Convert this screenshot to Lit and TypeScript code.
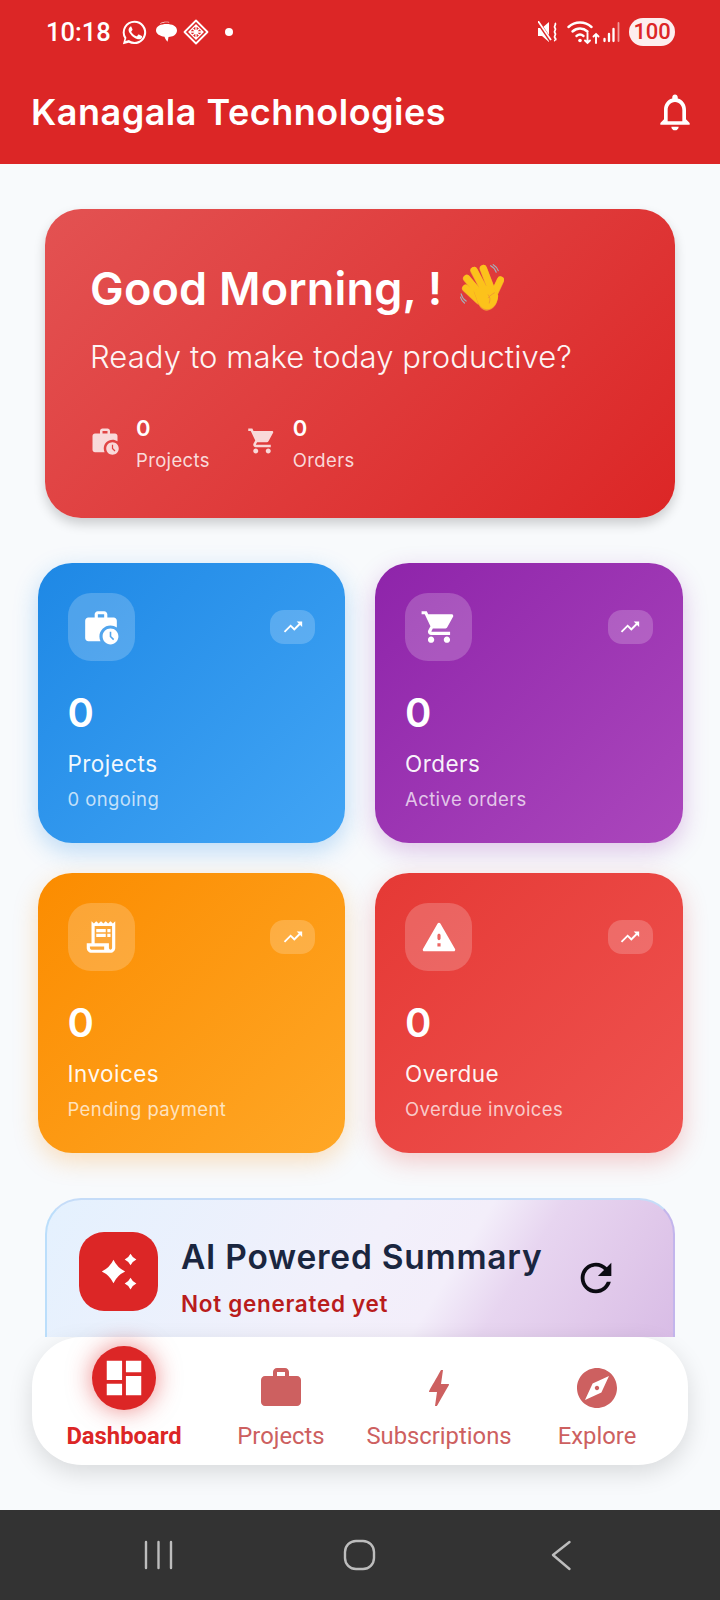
import { LitElement, html, css } from "lit";
import { customElement } from "lit/decorators.js";

const star = (cx: number, cy: number, r: number) => {
  const k = r * 0.32;
  return `M${cx} ${cy - r}Q${cx + k} ${cy - k} ${cx + r} ${cy}Q${cx + k} ${cy + k} ${cx} ${cy + r}Q${cx - k} ${cy + k} ${cx - r} ${cy}Q${cx - k} ${cy - k} ${cx} ${cy - r}z`;
};

const P = {
  bell: "M12 22c1.1 0 2-.9 2-2h-4c0 1.1.89 2 2 2zm6-6v-5c0-3.07-1.64-5.64-4.5-6.32V4c0-.83-.67-1.5-1.5-1.5s-1.5.67-1.5 1.5v.68C7.63 5.36 6 7.92 6 11v5l-2 2v1h16v-1l-2-2zm-2 1H8v-6c0-2.48 1.51-4.5 4-4.5s4 2.02 4 4.5v6z",
  workHistory: "M18 11c1.49 0 2.87.47 4 1.26V8c0-1.11-.89-2-2-2h-4V4c0-1.11-.89-2-2-2h-4c-1.11 0-2 .89-2 2v2H4c-1.11 0-1.99.89-1.99 2L2 19c0 1.11.89 2 2 2h7.68c-.43-.91-.68-1.92-.68-3 0-3.87 3.13-7 7-7zm-8-7h4v2h-4V4zM18 13c-2.76 0-5 2.24-5 5s2.24 5 5 5 5-2.24 5-5-2.24-5-5-5zm1.65 7.35L17.5 18.2V15h1v2.79l1.85 1.85-.7.71z",
  cart: "M7 18c-1.1 0-1.99.9-1.99 2S5.9 22 7 22s2-.9 2-2-.9-2-2-2zM1 2v2h2l3.6 7.59-1.35 2.45c-.16.28-.25.61-.25.96 0 1.1.9 2 2 2h12v-2H7.42c-.14 0-.25-.11-.25-.25l.03-.12.9-1.63h7.45c.75 0 1.41-.41 1.75-1.03l3.58-6.49c.08-.14.12-.31.12-.48 0-.55-.45-1-1-1H5.21l-.94-2H1zm16 16c-1.1 0-1.99.9-1.99 2s.89 2 1.99 2 2-.9 2-2-.9-2-2-2z",
  receipt: "M19.5 3.5 18 2l-1.5 1.5L15 2l-1.5 1.5L12 2l-1.5 1.5L9 2 7.5 3.5 6 2v14H3v3c0 1.66 1.34 3 3 3h12c1.66 0 3-1.34 3-3V2l-1.5 1.5zM15 20H6c-.55 0-1-.45-1-1v-1h9v2zm4-1c0 .55-.45 1-1 1s-1-.45-1-1v-3H8V5h11v14zM9 7h6v2H9zM16 7h2v2h-2zM9 10h6v2H9zM16 10h2v2h-2z",
  warning: "M2.73 21h18.53c.77 0 1.25-.83.87-1.5l-9.27-16c-.38-.67-1.35-.67-1.73 0l-9.27 16c-.38.67.1 1.5.87 1.5zM13 18h-2v-2h2v2zm-1-4c-.55 0-1-.45-1-1v-2c0-.55.45-1 1-1s1 .45 1 1v2c0 .55-.45 1-1 1z",
  trend: "M16 6l2.29 2.29-4.88 4.88-4-4L2 16.59 3.41 18l6-6 4 4 6.3-6.29L22 12V6z",
  dashboard: "M3 13h8V3H3v10zm0 8h8v-6H3v6zm10 0h8V11h-8v10zm0-18v6h8V3h-8z",
  work: "M20 6h-4V4c0-1.11-.89-2-2-2h-4c-1.11 0-2 .89-2 2v2H4c-1.11 0-1.99.89-1.99 2L2 19c0 1.11.89 2 2 2h16c1.11 0 2-.89 2-2V8c0-1.11-.89-2-2-2zm-6 0h-4V4h4v2z",
  bolt: "M11 21h-1l1-7H7.5c-.58 0-.57-.32-.38-.66.19-.34.05-.08.07-.12C8.48 10.94 10.42 7.54 13 3h1l-1 7h3.5c.49 0 .56.33.47.51l-.07.15C12.96 17.55 11 21 11 21z",
  explore: "M12 10.9c-.61 0-1.1.49-1.1 1.1s.49 1.1 1.1 1.1c.61 0 1.1-.49 1.1-1.1s-.49-1.1-1.1-1.1zM12 2C6.48 2 2 6.48 2 12s4.48 10 10 10 10-4.48 10-10S17.52 2 12 2zm2.19 12.19L6 18l3.81-8.19L18 6l-3.81 8.19z",
  sparkle: star(8.9, 12, 7.2) + star(19.4, 4.6, 3.6) + star(19.4, 19.4, 3.6),
  refresh: "M17.65 6.35C16.2 4.9 14.21 4 12 4c-4.42 0-7.99 3.58-7.99 8s3.57 8 7.99 8c3.73 0 6.84-2.55 7.73-6h-2.08c-.82 2.33-3.04 4-5.65 4-3.31 0-6-2.69-6-6s2.69-6 6-6c1.66 0 3.14.69 4.22 1.78L13 11h7V4l-2.35 2.35z",
  whatsapp: "M12 2.2A9.7 9.7 0 0 0 3.7 16.9L2.4 21.7l4.9-1.3A9.7 9.7 0 1 0 12 2.2zm0 1.8a7.9 7.9 0 1 1-4.3 14.5l-.3-.2-2.9.8.8-2.8-.2-.3A7.9 7.9 0 0 1 12 4zM8.8 7.3c-.2 0-.5.1-.7.3-.3.3-1 1-1 2.3s1 2.7 1.1 2.8c.1.2 1.9 3.1 4.8 4.2 2.3.9 2.8.7 3.3.7.5-.1 1.6-.7 1.8-1.3.2-.6.2-1.2.2-1.3-.1-.1-.3-.2-.6-.3l-2-1c-.3-.1-.5-.2-.7.1l-.9 1.2c-.2.2-.3.2-.6.1-.3-.2-1.3-.5-2.4-1.5-.9-.8-1.5-1.8-1.7-2.1-.2-.3 0-.5.1-.6l.5-.5c.1-.2.2-.3.3-.5.1-.2 0-.4 0-.5l-.9-2.1c-.2-.5-.4-.5-.6-.5z",
};

const icon = (d: string, size: number, cls = "") => html`<svg class=${cls} width=${size} height=${size} viewBox="0 0 24 24" fill="currentColor" aria-hidden="true"><path d=${d} fill-rule="evenodd"></path></svg>`;

const wave = html`<svg class="wave" width="45" height="48" viewBox="40 25 135 145" aria-hidden="true">
  <path d="M135 30c8 4 14 11 17 20M143 27c7 4 12 10 15 18M46 115c2 9 8 17 15 22M44 125c2 7 6 13 12 18" fill="none" stroke="#a3b0bb" stroke-width="3.5" stroke-linecap="round"></path>
  <g fill="none" stroke="#f19534" stroke-width="23" stroke-linecap="round">
    <path d="M60 99l40 37M63 69l42 50M85 45l34 65M113 39l25 65M165 74l-18 38"></path>
  </g>
  <g fill="none" stroke="#fcc21b" stroke-width="20.5" stroke-linecap="round">
    <path d="M60 98l40 37M63 68l42 50M85 44l34 65M113 38l25 65M165 73l-18 38"></path>
  </g>
  <path d="M92 130l-8-22 30-16 30 4 14 26c-2 22-12 42-34 44-16 0-26-14-32-36z" fill="#f19534"></path>
  <path d="M92 128l-8-22 30-16 30 4 14 26c-2 21-12 40-33 42-16 0-27-13-33-34z" fill="#fcc21b"></path>
  <path d="M128 118c6 6 6 16 3 25M147 112c-7 4-14 8-19 15" fill="none" stroke="#f19534" stroke-width="2.5" stroke-linecap="round"></path>
</svg>`;

const stats = [
  { icon: P.workHistory, value: "0", title: "Projects", sub: "0 ongoing", tone: "blue" },
  { icon: P.cart, value: "0", title: "Orders", sub: "Active orders", tone: "purple" },
  { icon: P.receipt, value: "0", title: "Invoices", sub: "Pending payment", tone: "orange" },
  { icon: P.warning, value: "0", title: "Overdue", sub: "Overdue invoices", tone: "red" },
];

const navItems = [
  { icon: P.work, label: "Projects" },
  { icon: P.bolt, label: "Subscriptions" },
  { icon: P.explore, label: "Explore" },
];

@customElement("app-root")
export class AppRoot extends LitElement {
  static styles = css`
    :host { display: block; width: 720px; height: 1600px; background: #f8fafc; font-family: "Inter", "Liberation Sans", sans-serif; overflow: hidden; }
    .page { display: flex; flex-direction: column; height: 1600px; }
    .appbar { height: 164px; flex: none; background: #dc2626; color: #fff; display: flex; flex-direction: column; box-sizing: border-box; }
    .status { height: 64px; display: flex; align-items: center; padding: 0 45px 0 46px; box-sizing: border-box; }
    .time { font: 500 25.5px "Roboto", sans-serif; width: 74px; margin-top: -1px; }
    .status-left { display: flex; align-items: center; flex: 1; }
    .status-left svg { display: block; }
    .s-msg { margin-left: 6px; }
    .s-diamond { margin-left: 4.5px; }
    .s-dot { width: 8px; height: 8px; border-radius: 50%; background: #fff; margin-left: 16.5px; }
    .status-right { display: flex; align-items: center; }
    .status-right svg { display: block; }
    .s-wifi { margin-left: 9px; }
    .s-signal { margin-left: 3px; }
    .batt { width: 46px; height: 28px; border-radius: 14px; background: #fdeeee; color: #dc2626; font: 500 22px/28px "Roboto", sans-serif; text-align: center; margin-left: 9px; letter-spacing: -0.2px; }
    .titlebar { flex: 1; display: flex; align-items: center; justify-content: space-between; padding: 0 23px 0 31px; margin-top: -4px; }
    .title { font-size: 36px; font-weight: 600; letter-spacing: 0.5px; }
    .main { height: 1173px; flex: none; overflow: hidden; box-sizing: border-box; padding: 45px 37.5px 0; }
    .hero { margin: 0 7.5px 45px; height: 309px; box-sizing: border-box; border-radius: 36px; padding: 46px 45px 0; color: #fff; background: linear-gradient(135deg, #e35252 0%, #dc2626 100%); box-shadow: 0 6px 12px rgba(0,0,0,.18); }
    .greet { display: flex; align-items: center; height: 62px; margin-top: 2px; font-size: 45px; font-weight: 600; letter-spacing: 0.2px; gap: 17px; }
    .ready { font-size: 31px; font-weight: 300; line-height: 40px; margin-top: 18px; opacity: .95; letter-spacing: 0.1px; }
    .hero-stats { display: flex; gap: 37px; margin-top: 38px; }
    .hs { display: flex; align-items: center; gap: 17px; }
    .hs svg { color: rgba(255,255,255,.8); margin: -6px -1px 0 0; }
    .hs b { display: block; font-size: 22px; font-weight: 600; line-height: 26px; }
    .hs span { display: block; font-size: 18.5px; line-height: 26px; font-weight: 400; color: rgba(255,255,255,.82); margin-top: 6px; letter-spacing: 0.35px; }
    .grid { display: grid; grid-template-columns: 1fr 1fr; gap: 30px; margin-bottom: 45px; }
    .card { height: 280px; box-sizing: border-box; border-radius: 34px; padding: 30px; color: #fff; display: flex; flex-direction: column; }
    .blue { background: linear-gradient(135deg, #1e88e5, #42a5f5); box-shadow: 0 8px 24px rgba(30,136,229,.28); }
    .purple { background: linear-gradient(135deg, #8e24aa, #ab47bc); box-shadow: 0 8px 24px rgba(142,36,170,.25); }
    .orange { background: linear-gradient(135deg, #fb8c00, #ffa726); box-shadow: 0 8px 24px rgba(251,140,0,.25); }
    .red { background: linear-gradient(135deg, #e53935, #ef5350); box-shadow: 0 8px 24px rgba(229,57,53,.25); }
    .card-top { display: flex; justify-content: space-between; align-items: center; height: 68px; }
    .ico { width: 67px; height: 68px; border-radius: 23px; background: rgba(255,255,255,.2); display: flex; align-items: center; justify-content: center; }
    .pill { width: 45px; height: 34px; border-radius: 14px; background: rgba(255,255,255,.2); display: flex; align-items: center; justify-content: center; }
    .num { font-size: 40px; font-weight: 600; line-height: 48px; margin-top: 28px; letter-spacing: 0.5px; }
    .card-title { font-size: 22.5px; font-weight: 400; line-height: 30px; margin-top: 12px; color: rgba(255,255,255,.95); letter-spacing: 0.45px; }
    .card-sub { font-size: 18.5px; line-height: 26px; margin-top: 7px; color: rgba(255,255,255,.72); letter-spacing: 0.4px; }
    .ai { margin: 0 7.5px; height: 260px; box-sizing: border-box; border-radius: 36px; border: 2px solid #bbdefb; border-right-color: #c3b5ec; border-top-color: #c5dcf8; padding: 32px; display: flex; align-items: flex-start; background: linear-gradient(122deg, #e4f1fe 0%, #f2f0fb 45%, #f3eefa 57%, #e7d5f0 66%, #e0c8ea 79%, #d9bde6 90%, #d6b8e3 100%); }
    .ai-ico { width: 79px; height: 79px; border-radius: 25px; background: #dc2626; color: #fff; display: flex; align-items: center; justify-content: center; flex: none; }
    .ai-text { margin-left: 23px; flex: 1; }
    .ai-title { font-size: 33.5px; font-weight: 600; color: #1a2640; line-height: 44px; margin-top: 3px; letter-spacing: 0.75px; white-space: nowrap; }
    .ai-sub { font-size: 22.5px; font-weight: 600; color: #b91c1c; line-height: 30px; margin-top: 10px; letter-spacing: 0.7px; }
    .ai-refresh { color: #0b0b12; margin: 23px 22px 0 0; flex: none; }
    .bottom { height: 173px; flex: none; padding: 0 32px; position: relative; z-index: 2; }
    .nav { height: 128px; background: #fff; border-radius: 50px; box-shadow: 0 8px 24px rgba(0,0,0,.13); display: grid; grid-template-columns: 184px 130px 186px 130px; }
    .nav-item { display: flex; flex-direction: column; align-items: center; color: #cd6060; font: 400 23.8px/28px "Roboto", sans-serif; }
    .nav-item svg { margin-top: 27px; display: block; }
    .nav-item span { margin-top: 10px; white-space: nowrap; }
    .nav-item.active { color: #dc2626; font-weight: 700; }
    .bubble { width: 64px; height: 64px; border-radius: 50%; background: #dc2626; color: #fff; margin-top: 9px; display: flex; align-items: center; justify-content: center; box-shadow: 0 0 24px rgba(220,38,38,.55); }
    .bubble svg { margin: 0; }
    .active span { margin-top: 12px; }
    .sysnav { height: 90px; flex: none; background: #333; color: #bdbdbd; position: relative; }
    .sysnav svg { position: absolute; left: 0; top: 0; }
  `;

  private statusLeft() {
    return html`<div class="status-left">
      <span class="time">10:18</span>
      ${icon(P.whatsapp, 29)}
      <svg class="s-msg" width="23" height="24" viewBox="0 0 23 24" aria-hidden="true"><path d="M5 3.5C7 1.8 11 1.2 14.5 2l-.6.5C10.8 2 8 2.5 5.6 3.8z" fill="#fff"></path><path d="M11.5 4C17 4 22 6 22 10.5c0 3.7-3.5 6-7 6.2l-1.5.2c-.3 1.5-.5 3.3-1 4.8-1.5-1.8-2.5-3.5-3-5C5 16 1 14 1 10.5 1 6 6 4 11.5 4z" fill="#fff"></path></svg>
      <svg class="s-diamond" width="26" height="26" viewBox="0 0 26 26" aria-hidden="true" fill="none" stroke="#fff"><path d="M13 1.5 24.5 13 13 24.5 1.5 13z" stroke-width="1.8" stroke-linejoin="round"></path><path d="M13 6 20 13 13 20 6 13zM9.5 9.5l7 7M16.5 9.5l-7 7M13 6v14M6 13h14" stroke-width="1.3"></path></svg>
      <span class="s-dot"></span>
    </div>`;
  }

  private statusRight() {
    return html`<div class="status-right">
      <svg width="20" height="22" viewBox="0 0 20 22" aria-hidden="true" fill="#fff"><path d="M0 7h4l7-6v20l-7-6H0z"></path><path d="M0 1l13 19" stroke="#dc2626" stroke-width="3.5"></path><path d="M0 0l13 19" stroke="#fff" stroke-width="1.8"></path><path d="M17 2c2 2-2 3 0 5s-2 3 0 5-2 3 0 5-1 2 0 3" fill="none" stroke="#fff" stroke-width="1.8"></path></svg>
      <svg class="s-wifi" width="33" height="26" viewBox="0 0 33 26" aria-hidden="true" fill="none" stroke="#fff" stroke-linecap="round"><path d="M1.5 8C8 2 18 2 24.5 8" stroke-width="2.4"></path><path d="M5.5 12.5c4.5-4 10.5-4 15 0" stroke-width="2.4"></path><path d="M9.5 17c2.5-2 4.5-2 7 0" stroke-width="2.4"></path><circle cx="13" cy="21.5" r="1.8" fill="#fff" stroke="none"></circle><path d="M20.5 14v10M18 21.5l2.5 2.5 2.5-2.5M29 24V15M26.5 17.5 29 15l2.5 2.5" stroke-width="1.9"></path></svg>
      <svg class="s-signal" width="17" height="22" viewBox="0 0 17 22" aria-hidden="true" stroke-linecap="round"><path d="M1.5 20v-2M6 20v-7M10.5 20V8" stroke="#fff" stroke-width="2.3"></path><path d="M15.5 20V2" stroke="#f29a9a" stroke-width="1.8"></path></svg>
      <span class="batt">100</span>
    </div>`;
  }

  render() {
    return html`<div class="page">
      <header class="appbar">
        <div class="status">${this.statusLeft()}${this.statusRight()}</div>
        <div class="titlebar"><span class="title">Kanagala Technologies</span>${icon(P.bell, 44)}</div>
      </header>
      <main class="main">
        <section class="hero">
          <div class="greet"><span>Good Morning, !</span>${wave}</div>
          <div class="ready">Ready to make today productive?</div>
          <div class="hero-stats">
            <div class="hs">${icon(P.workHistory, 30)}<div><b>0</b><span>Projects</span></div></div>
            <div class="hs">${icon(P.cart, 30)}<div><b>0</b><span>Orders</span></div></div>
          </div>
        </section>
        <section class="grid">
          ${stats.map((s) => html`<article class="card ${s.tone}">
            <div class="card-top"><div class="ico">${icon(s.icon, 38)}</div><div class="pill">${icon(P.trend, 22)}</div></div>
            <div class="num">${s.value}</div>
            <div class="card-title">${s.title}</div>
            <div class="card-sub">${s.sub}</div>
          </article>`)}
        </section>
        <section class="ai">
          <div class="ai-ico">${icon(P.sparkle, 39)}</div>
          <div class="ai-text"><div class="ai-title">AI Powered Summary</div><div class="ai-sub">Not generated yet</div></div>
          ${icon(P.refresh, 46, "ai-refresh")}
        </section>
      </main>
      <div class="bottom">
        <nav class="nav">
          <div class="nav-item active"><div class="bubble">${icon(P.dashboard, 46)}</div><span>Dashboard</span></div>
          ${navItems.map((n) => html`<div class="nav-item">${icon(n.icon, 48)}<span>${n.label}</span></div>`)}
        </nav>
      </div>
      <div class="sysnav">
        <svg width="720" height="90" viewBox="0 0 720 90" fill="none" stroke="currentColor" stroke-width="2.4" stroke-linecap="round" stroke-linejoin="round" aria-hidden="true">
          <path d="M146 32v26M158.5 32v26M171 32v26"></path>
          <rect x="345" y="31" width="29" height="28" rx="11"></rect>
          <path d="M569.5 32 553 45l16.5 14"></path>
        </svg>
      </div>
    </div>`;
  }
}
